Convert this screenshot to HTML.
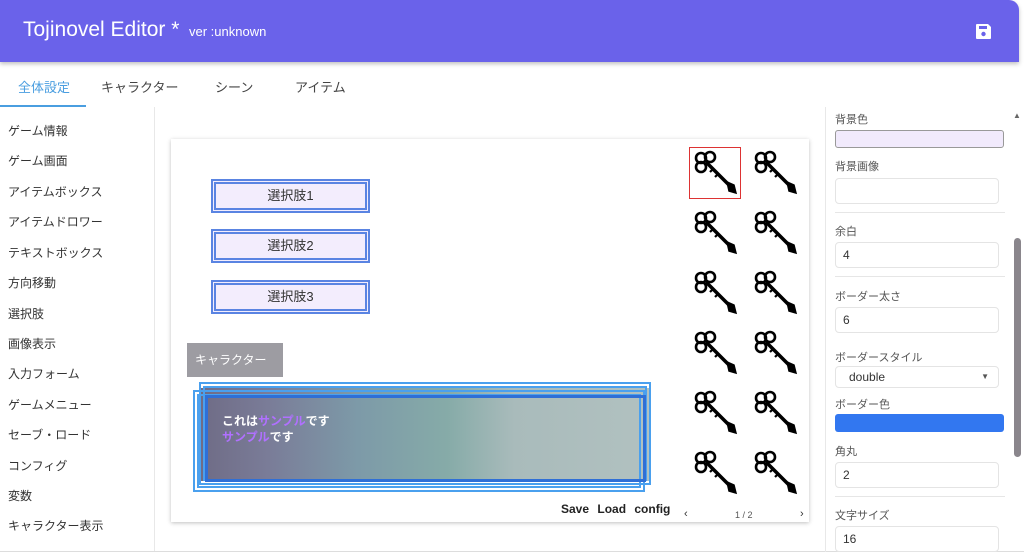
<!DOCTYPE html>
<html><head><meta charset="utf-8"><style>
*{box-sizing:border-box;margin:0;padding:0}
body{width:1024px;height:556px;overflow:hidden;background:#fff;font-family:"Liberation Sans","Noto Sans CJK JP",sans-serif;position:relative;color:#333}
.a{position:absolute}
#hdr{left:0;top:0;width:1019px;height:62px;background:#6a62ea;border-radius:0 10px 0 0;box-shadow:0 2px 4px rgba(0,0,0,.25);color:#fff}
.side div{position:absolute;left:8px;font-size:12px;color:#333}
.tab{top:77px;font-size:13px;color:#444}
.ch{left:211px;width:159px;height:34px;border:5px double #5a84e2;background:#f3edfd;font-size:13px;text-align:center;line-height:24px;color:#333}
.lbl{left:835px;font-size:11px;color:#555}
.inp{left:835px;width:164px;height:26px;border:1px solid #e4e4e4;border-radius:4px;font-size:12px;padding-left:7px;line-height:24px;color:#333}
.hr{left:835px;width:170px;height:1px;background:#e6e6e6}
</style></head><body>
<svg width="0" height="0" style="position:absolute"><defs><g id="k" fill="none" stroke="#000" stroke-width="2.6">
<circle cx="10" cy="9" r="5"/><circle cx="19" cy="8" r="5"/><circle cx="10" cy="18" r="5"/>
<path d="M15 13 L40 38" stroke-width="3.5"/><path d="M36 33 L43 36 L45 44 L38 42 Z" fill="#000" stroke-width="1.5"/><path d="M22 20 l-3 3 M27 25 l-3 3" stroke-width="2.2"/></g></defs></svg>
<div id="hdr" class="a"><div class="a" style="left:23px;top:18px;font-size:21px">Tojinovel Editor *</div><div class="a" style="left:189px;top:24px;font-size:13px">ver :unknown</div>
<svg class="a" style="left:975px;top:23px" width="17" height="17" viewBox="0 0 17 17"><path d="M1 2a1 1 0 0 1 1-1h11l3 3v11a1 1 0 0 1-1 1H2a1 1 0 0 1-1-1z" fill="#fff"/><rect x="4" y="3" width="8" height="3" fill="#6a62ea"/><circle cx="8.5" cy="11" r="2.2" fill="#6a62ea"/></svg></div>
<div class="a tab" style="left:18px;color:#4a9ee0">全体設定</div><div class="a tab" style="left:101px">キャラクター</div><div class="a tab" style="left:215px">シーン</div><div class="a tab" style="left:295px">アイテム</div>
<div class="a" style="left:0;top:105px;width:86px;height:2px;background:#4a9ee0"></div>
<div class="a" style="left:154px;top:107px;width:1px;height:445px;background:#e8e8e8"></div>
<div class="a" style="left:0;top:551px;width:1024px;height:1px;background:#ddd"></div>
<div class="side">
<div style="top:122px">ゲーム情報</div><div style="top:152px">ゲーム画面</div><div style="top:183px">アイテムボックス</div><div style="top:213px">アイテムドロワー</div><div style="top:244px">テキストボックス</div><div style="top:274px">方向移動</div><div style="top:305px">選択肢</div><div style="top:335px">画像表示</div><div style="top:365px">入力フォーム</div><div style="top:396px">ゲームメニュー</div><div style="top:426px">セーブ・ロード</div><div style="top:457px">コンフィグ</div><div style="top:487px">変数</div><div style="top:517px">キャラクター表示</div></div>
<div class="a" style="left:171px;top:139px;width:638px;height:383px;background:#fff;box-shadow:0 1px 4px rgba(0,0,0,.25)"></div>
<div class="a ch" style="top:179px">選択肢1</div><div class="a ch" style="top:229px">選択肢2</div><div class="a ch" style="top:280px">選択肢3</div>
<div class="a" style="left:187px;top:343px;width:96px;height:34px;background:#9d9ca2;color:#fff;font-size:12px;line-height:34px;padding-left:8px">キャラクター</div>
<div class="a" style="left:201px;top:388px;width:448px;height:93px;background:linear-gradient(90deg,#6f6c86 0%,#7a7c98 15%,#7d9aa8 35%,#86aba8 55%,#a9bbbb 70%,#b1c1c0 100%)"></div>
<div class="a" style="left:199px;top:382px;width:452px;height:103px;border:6px double #4aa0ee"></div>
<div class="a" style="left:193px;top:390px;width:452px;height:102px;border:6px double #4aa0ee"></div>
<div class="a" style="left:205px;top:395px;width:441px;height:87px;border:3px solid #2f6fd6"></div>
<div class="a" style="left:222px;top:413px;font-size:12px;color:#fff;line-height:16px;font-weight:bold">これは<span style="color:#b070ff">サンプル</span>です<br><span style="color:#b070ff">サンプル</span>です</div>
<div class="a" style="left:561px;top:502px;font-size:12px;color:#222;word-spacing:5px;font-weight:bold">Save Load config</div>
<div class="a" style="left:689px;top:147px;width:52px;height:52px;border:1px solid #d33"></div>
<svg class="a" style="left:688px;top:145px" width="120" height="360">
<g transform="translate(3,4)"><use href="#k"/></g><g transform="translate(63,4)"><use href="#k"/></g>
<g transform="translate(3,64)"><use href="#k"/></g><g transform="translate(63,64)"><use href="#k"/></g>
<g transform="translate(3,124)"><use href="#k"/></g><g transform="translate(63,124)"><use href="#k"/></g>
<g transform="translate(3,184)"><use href="#k"/></g><g transform="translate(63,184)"><use href="#k"/></g>
<g transform="translate(3,244)"><use href="#k"/></g><g transform="translate(63,244)"><use href="#k"/></g>
<g transform="translate(3,304)"><use href="#k"/></g><g transform="translate(63,304)"><use href="#k"/></g></svg>
<div class="a" style="left:684px;top:508px;font-size:11px;color:#333">‹</div><div class="a" style="left:735px;top:510px;font-size:9px;color:#555">1 / 2</div><div class="a" style="left:800px;top:508px;font-size:11px;color:#333">›</div>
<div class="a" style="left:825px;top:107px;width:1px;height:445px;background:#e8e8e8"></div>
<div class="a lbl" style="top:111px">背景色</div>
<div class="a" style="left:835px;top:130px;width:169px;height:18px;border:1px solid #999;border-radius:3px;background:#f1eafc"></div>
<div class="a lbl" style="top:158px">背景画像</div><div class="a inp" style="top:178px"></div><div class="a hr" style="top:212px"></div>
<div class="a lbl" style="top:223px">余白</div><div class="a inp" style="top:242px">4</div><div class="a hr" style="top:276px"></div>
<div class="a lbl" style="top:288px">ボーダー太さ</div><div class="a inp" style="top:307px">6</div>
<div class="a lbl" style="top:349px">ボーダースタイル</div><div class="a inp" style="top:366px;height:22px;line-height:20px;padding-left:13px">double<span style="position:absolute;right:9px;top:0;font-size:8px;color:#555">▼</span></div>
<div class="a lbl" style="top:396px">ボーダー色</div><div class="a" style="left:835px;top:414px;width:169px;height:18px;border-radius:3px;background:#3277f0"></div>
<div class="a lbl" style="top:443px">角丸</div><div class="a inp" style="top:462px">2</div><div class="a hr" style="top:496px"></div>
<div class="a lbl" style="top:507px">文字サイズ</div><div class="a inp" style="top:526px">16</div>
<div class="a" style="left:1014px;top:238px;width:7px;height:219px;background:#8a868c;border-radius:4px"></div>
<div class="a" style="left:1013px;top:111px;font-size:8px;color:#666">▲</div>
</body></html>
